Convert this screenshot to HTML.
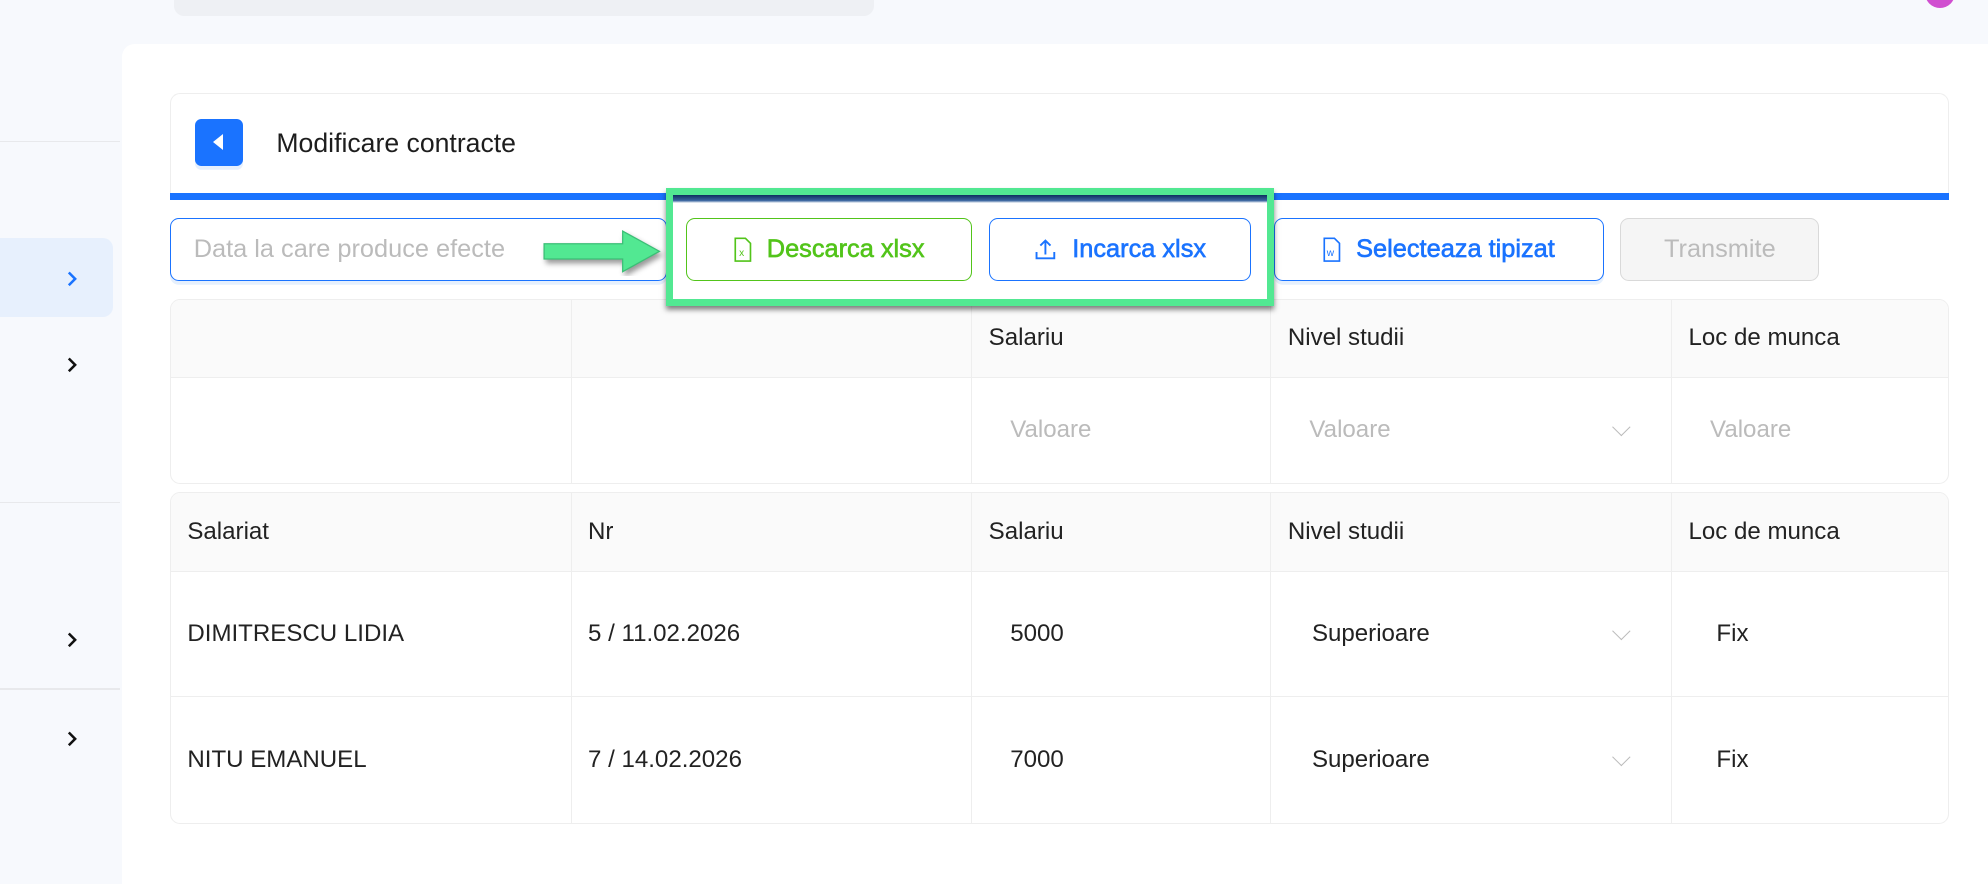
<!DOCTYPE html>
<html><head><meta charset="utf-8"><style>
*{box-sizing:border-box;margin:0;padding:0}
html,body{width:1988px;height:884px;overflow:hidden;background:#f7f9fd;font-family:"Liberation Sans",sans-serif}
#w{position:relative;width:1568px;height:697px;zoom:1.26786}
.a{position:absolute}
.line{position:absolute;left:0;width:95px;height:1px;background:#e8e9ec}
.chev{position:absolute;left:51px;width:12px;height:14px}
.btn{position:absolute;top:172px;height:50px;border:1px solid #1a73ff;border-radius:7px;color:#1a73ff;font-size:20px;display:flex;align-items:center;justify-content:center;gap:12px;background:#fff}
.md{-webkit-text-stroke:0.5px currentColor}
.tbl{position:absolute;left:134px;width:1403px;border:1px solid #eee;border-radius:8px;overflow:hidden;background:#fff}
.row{display:flex;border-bottom:1px solid #eee}
.row:last-child{border-bottom:none}
.c{border-right:1px solid #eee;display:flex;align-items:center;padding-left:13px;font-size:19px;color:#222;position:relative}
.c:last-child{border-right:none}
.h{background:#fafafa}
.ph{color:#bbb;padding-left:30px}
.dd{position:absolute;right:34px;top:50%;width:10px;height:10px;border-right:1px solid #bbb;border-bottom:1px solid #bbb;transform:translateY(-75%) rotate(45deg)}
</style></head><body><div id="w">
<div class="a" style="left:137px;top:-10px;width:552px;height:23px;background:#eef0f4;border-radius:8px"></div>
<div class="a" style="left:1518px;top:-18px;width:24px;height:24px;border-radius:50%;background:#d04fd0"></div>
<div class="line" style="top:111px"></div>
<div class="line" style="top:396px"></div>
<div class="line" style="top:543px"></div>
<div class="a" style="left:0;top:188px;width:89px;height:62px;background:#e7f0fd;border-radius:0 8px 8px 0"></div>
<svg class="chev" style="top:213px" viewBox="0 0 12 14"><path d="M3 2l5 5-5 5" fill="none" stroke="#1a73ff" stroke-width="2"/></svg>
<svg class="chev" style="top:281px" viewBox="0 0 12 14"><path d="M3 2l5 5-5 5" fill="none" stroke="#111" stroke-width="2"/></svg>
<svg class="chev" style="top:498px" viewBox="0 0 12 14"><path d="M3 2l5 5-5 5" fill="none" stroke="#111" stroke-width="2"/></svg>
<svg class="chev" style="top:576px" viewBox="0 0 12 14"><path d="M3 2l5 5-5 5" fill="none" stroke="#111" stroke-width="2"/></svg>
<div class="a" style="left:96px;top:35px;width:1480px;height:670px;background:#fff;border-radius:10px 0 0 0"></div>
<div class="a" style="left:134px;top:73px;width:1403px;height:85px;border:1px solid #eee;border-bottom:none;border-radius:8px 8px 0 0;background:#fff"></div>
<div class="a" style="left:154px;top:94px;width:38px;height:37px;background:#1a73ff;border-radius:5px;box-shadow:0 3px 0 #e6f0fd"><div class="a" style="left:14px;top:12px;width:0;height:0;border-top:7px solid transparent;border-bottom:7px solid transparent;border-right:8px solid #fff"></div></div>
<div class="a" style="left:218px;top:101px;font-size:21px;color:#1d1d1d">Modificare contracte</div>
<div class="a" style="left:134px;top:152px;width:1403px;height:6px;background:#1a73ff"></div>
<div class="btn" style="left:134px;width:392px;justify-content:flex-start;padding-left:18px;color:#bbb;box-shadow:0 3px 0 #e6f0fd">Data la care produce efecte</div>
<div class="btn md" style="left:541px;width:226px;border-color:#52c41a;color:#52c41a"><svg width="14" height="20" viewBox="0 0 14 20"><path d="M1 1h8l4 4v14H1z" fill="none" stroke="#52c41a" stroke-width="1.3"/><text x="4" y="15" font-size="8" fill="#52c41a" font-family="Liberation Sans">x</text></svg>Descarca xlsx</div>
<div class="btn md" style="left:780px;width:207px"><svg width="18" height="18" viewBox="0 0 18 18"><path d="M9 13V2M5 6l4-4 4 4M2 11v5h14v-5" fill="none" stroke="#1a73ff" stroke-width="1.5"/></svg>Incarca xlsx</div>
<div class="btn md" style="left:1005px;width:260px;box-shadow:0 3px 0 #e6f0fd"><svg width="14" height="20" viewBox="0 0 14 20"><path d="M1 1h8l4 4v14H1z" fill="none" stroke="#1a73ff" stroke-width="1.3"/><text x="3" y="15" font-size="8" fill="#1a73ff" font-family="Liberation Sans">w</text></svg>Selecteaza tipizat</div>
<div class="btn" style="left:1278px;width:157px;border-color:#d9d9d9;background:#f5f5f5;color:#bbb">Transmite</div>
<div class="tbl" style="top:236px">
<div class="row h" style="height:61px"><div class="c" style="width:316px"></div><div class="c" style="width:316px"></div><div class="c" style="width:236px">Salariu</div><div class="c" style="width:316px">Nivel studii</div><div class="c" style="flex:1">Loc de munca</div></div>
<div class="row" style="height:83px"><div class="c" style="width:316px"></div><div class="c" style="width:316px"></div><div class="c ph" style="width:236px">Valoare</div><div class="c ph" style="width:316px">Valoare<span class="dd"></span></div><div class="c ph" style="flex:1">Valoare</div></div>
</div>
<div class="tbl" style="top:388px">
<div class="row h" style="height:62px"><div class="c" style="width:316px">Salariat</div><div class="c" style="width:316px">Nr</div><div class="c" style="width:236px">Salariu</div><div class="c" style="width:316px">Nivel studii</div><div class="c" style="flex:1">Loc de munca</div></div>
<div class="row" style="height:99px"><div class="c" style="width:316px">DIMITRESCU LIDIA</div><div class="c" style="width:316px">5 / 11.02.2026</div><div class="c" style="width:236px;padding-left:30px">5000</div><div class="c" style="width:316px;padding-left:32px">Superioare<span class="dd"></span></div><div class="c" style="flex:1;padding-left:35px">Fix</div></div>
<div class="row" style="height:99px"><div class="c" style="width:316px">NITU EMANUEL</div><div class="c" style="width:316px">7 / 14.02.2026</div><div class="c" style="width:236px;padding-left:30px">7000</div><div class="c" style="width:316px;padding-left:32px">Superioare<span class="dd"></span></div><div class="c" style="flex:1;padding-left:35px">Fix</div></div>
</div>
<div class="a" style="left:525px;top:148px;width:480px;height:93px;border:6px solid #52e892;box-shadow:0 3px 4px rgba(0,0,0,.5);z-index:5"></div>
<div class="a" style="left:531px;top:154px;width:468px;height:6px;background:linear-gradient(#0e2f5e,#3a66a0 70%,transparent);z-index:5"></div>
<svg class="a" style="left:425px;top:178px;z-index:5" width="100" height="40" viewBox="0 0 100 40"><path d="M4 14h62V4l29 16-29 16V26H4z" fill="#52e892" stroke="#3bbf76" stroke-width="1" filter="drop-shadow(2px 3px 2px rgba(0,0,0,.4))"/></svg>
</div></body></html>
